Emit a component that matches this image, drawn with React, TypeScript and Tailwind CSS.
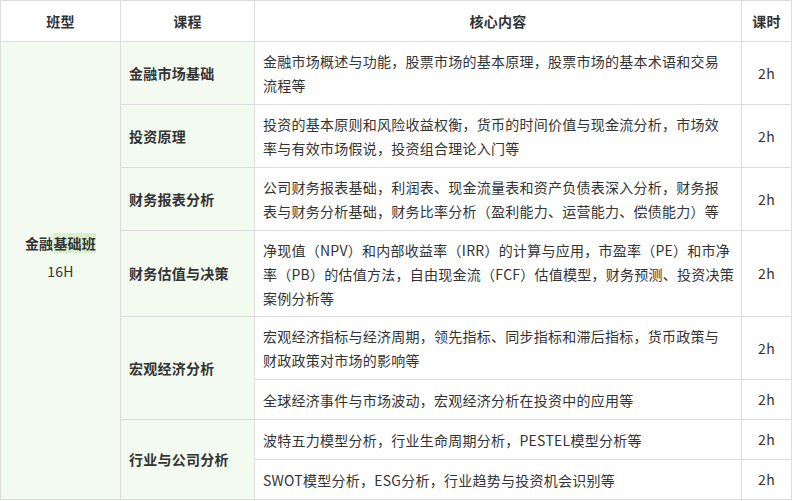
import React from "react";

interface Topic {
  lines: string[];
  hours: string;
  height: string;
}

interface Course {
  name: string;
  topics: Topic[];
}

const courses: Course[] = [
  {
    name: "金融市场基础",
    topics: [
      {
        lines: [
          "金融市场概述与功能，股票市场的基本原理，股票市场的基本术语和交易",
          "流程等",
        ],
        hours: "2h",
        height: "h-[63px]",
      },
    ],
  },
  {
    name: "投资原理",
    topics: [
      {
        lines: [
          "投资的基本原则和风险收益权衡，货币的时间价值与现金流分析，市场效",
          "率与有效市场假说，投资组合理论入门等",
        ],
        hours: "2h",
        height: "h-[63px]",
      },
    ],
  },
  {
    name: "财务报表分析",
    topics: [
      {
        lines: [
          "公司财务报表基础，利润表、现金流量表和资产负债表深入分析，财务报",
          "表与财务分析基础，财务比率分析（盈利能力、运营能力、偿债能力）等",
        ],
        hours: "2h",
        height: "h-[63px]",
      },
    ],
  },
  {
    name: "财务估值与决策",
    topics: [
      {
        lines: [
          "净现值（NPV）和内部收益率（IRR）的计算与应用，市盈率（PE）和市净",
          "率（PB）的估值方法，自由现金流（FCF）估值模型，财务预测、投资决策",
          "案例分析等",
        ],
        hours: "2h",
        height: "h-[86px]",
      },
    ],
  },
  {
    name: "宏观经济分析",
    topics: [
      {
        lines: [
          "宏观经济指标与经济周期，领先指标、同步指标和滞后指标，货币政策与",
          "财政政策对市场的影响等",
        ],
        hours: "2h",
        height: "h-[63px]",
      },
      {
        lines: ["全球经济事件与市场波动，宏观经济分析在投资中的应用等"],
        hours: "2h",
        height: "h-[40px]",
      },
    ],
  },
  {
    name: "行业与公司分析",
    topics: [
      {
        lines: ["波特五力模型分析，行业生命周期分析，PESTEL模型分析等"],
        hours: "2h",
        height: "h-[40px]",
      },
      {
        lines: ["SWOT模型分析，ESG分析，行业趋势与投资机会识别等"],
        hours: "2h",
        height: "h-[40px]",
      },
    ],
  },
];

const totalRows = courses.reduce((n, c) => n + c.topics.length, 0);

const cell = "border border-[#dcdcdc] align-middle";

export default function App() {
  return (
    <div className="bg-white w-[792px] h-[501px] overflow-hidden font-['Noto_Sans_CJK_SC',sans-serif] text-[14px] tracking-[0.25px] text-[#333]">
      <table className="table-fixed border-collapse w-[791px]">
        <colgroup>
          <col className="w-[120px]" />
          <col className="w-[134px]" />
          <col className="w-[487px]" />
          <col className="w-[50px]" />
        </colgroup>
        <thead>
          <tr className="h-[41px]">
            <th className={`${cell} font-bold text-center`}>班型</th>
            <th className={`${cell} font-bold text-center`}>课程</th>
            <th className={`${cell} font-bold text-center`}>核心内容</th>
            <th className={`${cell} font-bold text-center`}>课时</th>
          </tr>
        </thead>
        <tbody>
          {courses.map((course, ci) =>
            course.topics.map((topic, ti) => (
              <tr key={`${ci}-${ti}`} className={topic.height}>
                {ci === 0 && ti === 0 && (
                  <td
                    rowSpan={totalRows}
                    className={`${cell} bg-[#f3faf0] text-center`}
                  >
                    <div className="flex flex-col items-center gap-[5px] pb-[26px] leading-[23px]">
                      <span className="font-bold">
                        金融<span className="bg-[#d9edcf]">基础班</span>
                      </span>
                      <span>16H</span>
                    </div>
                  </td>
                )}
                {ti === 0 && (
                  <td
                    rowSpan={course.topics.length}
                    className={`${cell} bg-[#f3faf0] font-bold px-2`}
                  >
                    {course.name}
                  </td>
                )}
                <td className={`${cell} px-[8px] leading-[24px]`}>
                  {topic.lines.map((line, li) => (
                    <div key={li} className="whitespace-nowrap">
                      {line}
                    </div>
                  ))}
                </td>
                <td className={`${cell} text-center`}>{topic.hours}</td>
              </tr>
            ))
          )}
        </tbody>
      </table>
    </div>
  );
}
